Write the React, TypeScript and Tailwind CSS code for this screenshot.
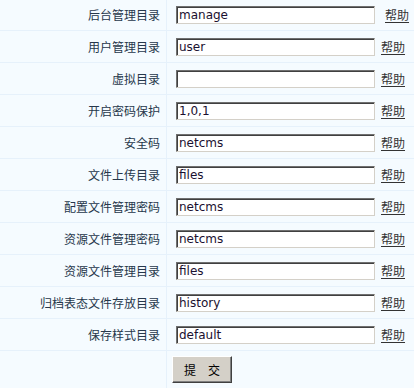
import React from 'react';

const rows: { label: string; value: string }[] = [
  { label: '后台管理目录', value: 'manage' },
  { label: '用户管理目录', value: 'user' },
  { label: '虚拟目录', value: '' },
  { label: '开启密码保护', value: '1,0,1' },
  { label: '安全码', value: 'netcms' },
  { label: '文件上传目录', value: 'files' },
  { label: '配置文件管理密码', value: 'netcms' },
  { label: '资源文件管理密码', value: 'netcms' },
  { label: '资源文件管理目录', value: 'files' },
  { label: '归档表态文件存放目录', value: 'history' },
  { label: '保存样式目录', value: 'default' },
];

export default function App() {
  return (
    <div
      className="w-[414px] h-[388px] overflow-hidden bg-[#f5fbff] text-[12px]"
      style={{ fontFamily: '"Noto Sans CJK SC", "DejaVu Sans", sans-serif' }}
    >
      {rows.map((r, i) => (
        <div
          key={r.label}
          className={`flex border-b border-[#e6f1fb] ${i === 0 ? 'h-[31px]' : 'h-[32px]'}`}
        >
          <div className="w-[167px] shrink-0 flex items-center justify-end pr-[6px] border-r border-[#e6f1fb] text-[#26374b]">
            {r.label}
          </div>
          <div className="flex items-center pl-[9px]">
            <input
              defaultValue={r.value}
              className="w-[199px] h-[18px] pl-[2px] pr-[1px] bg-white text-[12px] text-[#1a1030] outline-none border border-t-[#707070] border-l-[#707070] border-r-[#d4d0c8] border-b-[#d4d0c8] shadow-[inset_1px_1px_0_#404040]"
              style={{ fontFamily: '"DejaVu Sans", Verdana, sans-serif' }}
            />
            <a
              href="#"
              className={`${i === 0 ? 'ml-[10px]' : 'ml-[6px]'} text-[#333] underline underline-offset-2`}
            >
              帮助
            </a>
          </div>
        </div>
      ))}
      <div className="flex h-[37px]">
        <div className="w-[167px] shrink-0 border-r border-[#e6f1fb]" />
        <div className="pl-[5px] pt-[5px]">
          <button
            type="button"
            className="w-[60px] h-[27px] bg-[#d4d0c8] text-black text-[12px] border border-t-white border-l-white border-r-[#404040] border-b-[#404040] shadow-[inset_-1px_-1px_0_#808080]"
          >
            提　交
          </button>
        </div>
      </div>
    </div>
  );
}
